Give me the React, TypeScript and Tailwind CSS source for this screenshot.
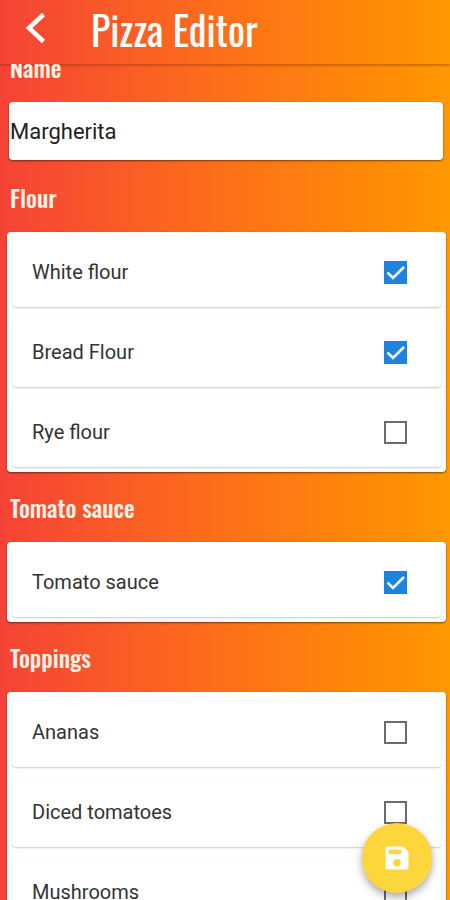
import { useState } from "react";

type Option = { name: string; selected: boolean };

const flours: Option[] = [
  { name: "White flour", selected: true },
  { name: "Bread Flour", selected: true },
  { name: "Rye flour", selected: false },
];

const sauces: Option[] = [{ name: "Tomato sauce", selected: true }];

const toppings: Option[] = [
  { name: "Ananas", selected: false },
  { name: "Diced tomatoes", selected: false },
  { name: "Mushrooms", selected: false },
];

const headingClass =
  "flex h-[70px] items-center px-[3px] font-['Oswald','Liberation_Sans_Narrow','Roboto',sans-serif] text-2xl font-medium text-[#fff1e4]";

function OptionRow({ option }: { option: Option }) {
  const [checked, setChecked] = useState(option.selected);
  return (
    <li className="h-20 p-[5px]">
      <label className="flex h-full items-center justify-between rounded pl-5 pr-[34px] shadow-[0_1px_2px_rgba(0,0,0,0.22)]">
        <span>{option.name}</span>
        <span className="grid size-[23px] place-items-center">
          <input
            type="checkbox"
            checked={checked}
            onChange={(e) => setChecked(e.target.checked)}
            className="peer col-start-1 row-start-1 size-full appearance-none border-2 border-[#6b6b6b] bg-white checked:border-[#1c84dc] checked:bg-[#1c84dc]"
          />
          <svg
            viewBox="0 0 23 23"
            aria-hidden="true"
            className="pointer-events-none invisible col-start-1 row-start-1 size-full fill-none stroke-white stroke-[2.5] peer-checked:visible"
          >
            <path d="M3.5 11.5 9 17 20 6" />
          </svg>
        </span>
      </label>
    </li>
  );
}

function OptionSection({ title, options }: { title: string; options: Option[] }) {
  return (
    <section>
      <h2 className={headingClass}>{title}</h2>
      <ul className="rounded bg-white shadow-[0_1px_2px_rgba(0,0,0,0.5)]">
        {options.map((option) => (
          <OptionRow key={option.name} option={option} />
        ))}
      </ul>
    </section>
  );
}

export default function App() {
  const [name, setName] = useState("Margherita");
  return (
    <div className="relative flex h-screen flex-col overflow-hidden bg-linear-to-r/srgb from-[#f44336] via-[#fc6c1b] via-45% to-[#ff9800] font-['Roboto',sans-serif] text-xl text-[#333333]">
      <header className="flex h-16 shrink-0 items-center pb-1.5 shadow-[0_1px_3px_rgba(120,40,0,0.55)]">
        <button type="button" aria-label="Back" className="ml-5 mr-[39px] grid size-8 place-items-center">
          <svg viewBox="0 0 32 32" aria-hidden="true" className="size-8 fill-none stroke-white stroke-[4.5]">
            <path d="M23.500 1.500 9 15 23.500 28.500" />
          </svg>
        </button>
        <h1 className="font-['Oswald','Liberation_Sans_Narrow','Roboto',sans-serif] text-[40px] leading-none text-white">
          Pizza Editor
        </h1>
      </header>

      <main className="min-h-0 flex-1 overflow-hidden">
        <form className="-mt-8 pl-[7px] pr-1" onSubmit={(e) => e.preventDefault()}>
          <label htmlFor="pizza-name" className={headingClass}>
            Name
          </label>
          <div className="h-[60px] pl-0.5 pr-[3px]">
            <input
              id="pizza-name"
              type="text"
              value={name}
              onChange={(e) => setName(e.target.value)}
              className="block h-[58px] w-full rounded bg-white px-px text-[22px] text-[#222222] shadow-[0_1px_2px_rgba(0,0,0,0.5)] outline-none"
            />
          </div>
          <OptionSection title="Flour" options={flours} />
          <OptionSection title="Tomato sauce" options={sauces} />
          <OptionSection title="Toppings" options={toppings} />
        </form>
      </main>

      <button
        type="button"
        aria-label="Save pizza"
        className="absolute bottom-[7px] right-[18px] grid size-[70px] place-items-center rounded-full bg-[#fdd63b] shadow-[0_4px_8px_rgba(0,0,0,0.35)]"
      >
        <svg viewBox="0 0 24 24" aria-hidden="true" className="size-6">
          <path
            fill="white"
            fillRule="evenodd"
            d="M3 0.500H18L23.500 6V21a2.500 2.500 0 0 1-2.500 2.500H3A2.500 2.500 0 0 1 0.500 21V3A2.500 2.500 0 0 1 3 0.500ZM4.500 3.500a1 1 0 0 0-1 1v2.500a1 1 0 0 0 1 1h11a1 1 0 0 0 1-1V4.500a1 1 0 0 0-1-1ZM12 13a3.800 3.800 0 1 0 0 7.600 3.800 3.800 0 1 0 0-7.600Z"
          />
        </svg>
      </button>
    </div>
  );
}
